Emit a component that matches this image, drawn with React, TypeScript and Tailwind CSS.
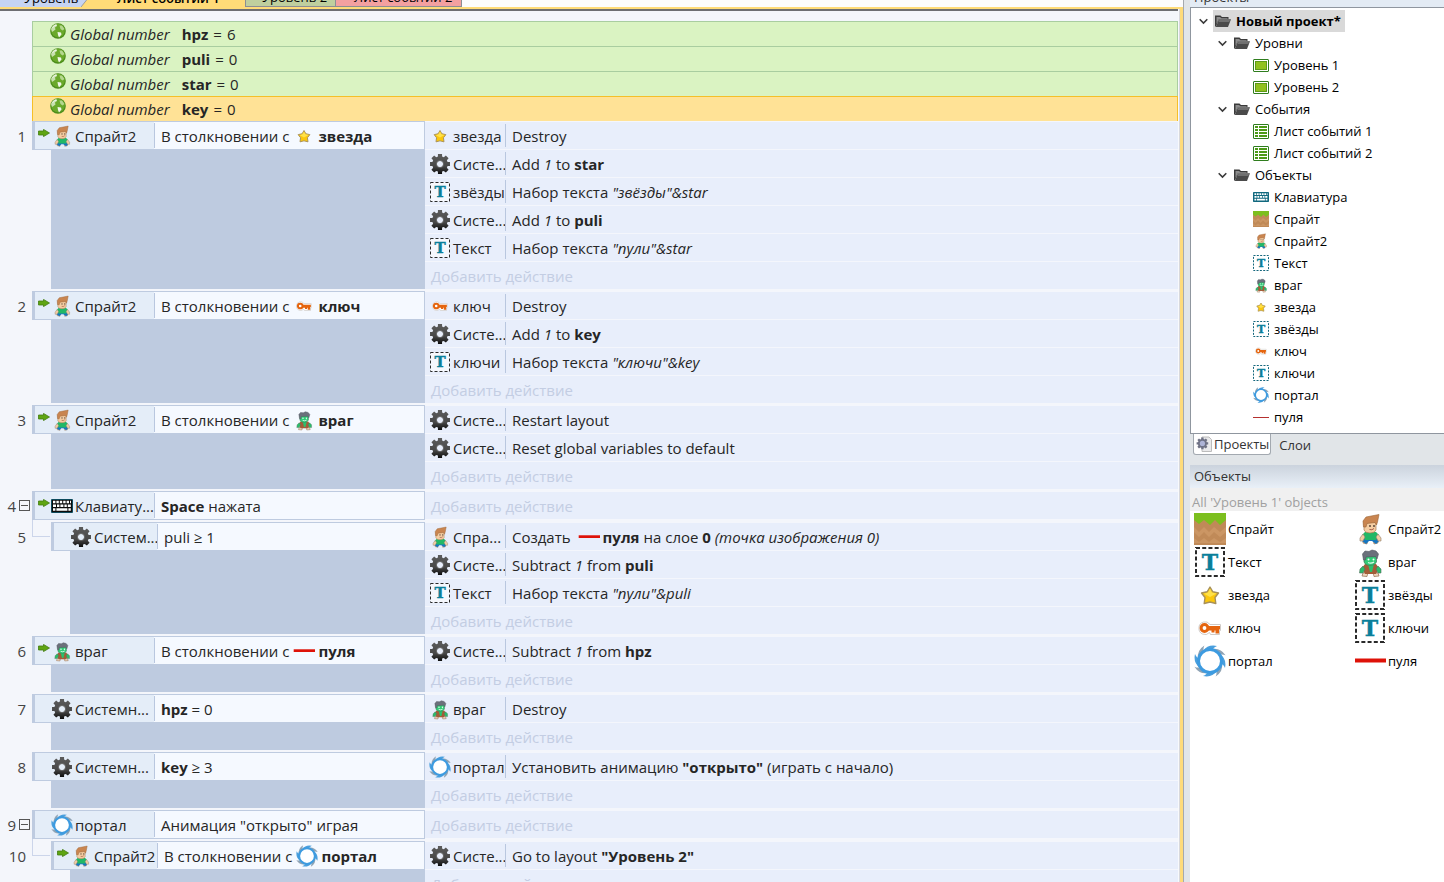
import React from "react";

type IconName =
  | "boy" | "zombie" | "star" | "key" | "portal" | "gear" | "text"
  | "keyboard" | "keyboardTeal" | "bullet" | "bulletThin" | "ground";

const PORTAL_BLADES = [0, 45, 90, 135, 180, 225, 270, 315];

function Shape({ name }: { name: IconName }) {
  switch (name) {
    case "boy":
      return (
        <g>
          <path d="M9 28 L14 26 L13 31 L9 30 Z M24 28 L19 26 L20 31 L24 30 Z" fill="#e8b98e" stroke="#8f6a4b" strokeWidth="0.600" />
          <path d="M10 25 H23 L25 28 L22 31 L18 28 H15 L12 31 L8 28 Z" fill="#1676c0" />
          <path d="M8 22 L11 19 H22 L25 22 L22 27 H11 Z" fill="#22b866" />
          <path d="M9 21 L11 24 L9 28 L6 28 L6 25 Z" fill="#f3cda4" stroke="#8f7a66" strokeWidth="0.600" />
          <path d="M24 21 L22 24 L24 28 L27 28 L27 25 Z" fill="#f3cda4" stroke="#8f7a66" strokeWidth="0.600" />
          <path d="M10 9 H22 V17 Q21 20 16 20 Q11 20 10 17 Z" fill="#f5cda2" stroke="#a67c55" strokeWidth="0.700" />
          <path d="M9.500 14 L9 8 L12 4 L25 1.500 L23.500 9 L22.500 12 L21 9.500 L13 10.500 L12 14 Z" fill="#c98550" stroke="#9b6435" strokeWidth="0.600" />
          <circle cx="16" cy="13" r="0.900" fill="#4a3a30" />
          <circle cx="20" cy="13" r="0.900" fill="#4a3a30" />
          <path d="M15.500 16.500 q2.500 1 4.500 -1" stroke="#a5604a" fill="none" />
        </g>
      );
    case "zombie":
      return (
        <g>
          <path d="M9 27 L14 26 L13 30.500 L8 30 Z M24 27 L19 26 L20 30.500 L25 30 Z" fill="#efd6bf" stroke="#8f6a4b" strokeWidth="0.700" />
          <path d="M8 22 L11 18 H22 L25 22 L22 28 H11 Z" fill="#a35d38" />
          <path d="M14 18 H20 L18 26 H16 Z" fill="#2ac16d" />
          <path d="M9 20 L11 23 L9 27 L5.500 27 L6 23 Z" fill="#29bd6a" stroke="#55705f" strokeWidth="0.600" />
          <path d="M24 20 L22 23 L24 27 L27 27 L27 23 Z" fill="#29bd6a" stroke="#55705f" strokeWidth="0.600" />
          <path d="M10 10 H22.500 V16 Q21 19.500 16 19.500 Q11 19.500 10 16 Z" fill="#31cb76" stroke="#43785a" strokeWidth="0.700" />
          <path d="M9.500 14 L8.500 8 L11 5 L15 5.500 L18 4 L22 5 L24.500 8 L23 13 L21.500 10.500 L12 11 L11.500 14 Z" fill="#6b707b" stroke="#505560" strokeWidth="0.600" />
          <circle cx="14.500" cy="13.500" r="1" fill="#f5fff8" />
          <circle cx="19.500" cy="13.500" r="1" fill="#f5fff8" />
          <path d="M14 16.500 q3 1.500 6 -0.500" stroke="#e4fbee" strokeWidth="1.200" fill="none" />
        </g>
      );
    case "star":
      return (
        <g>
          <path d="M16 8 L18.700 12.700 L24.500 14 L21 18.500 L21.800 24.500 L16 23 L10.200 24.500 L11 18.500 L7.500 14 L13.300 12.700 Z" fill="#fbc70d" stroke="#a8915a" strokeWidth="1.400" strokeLinejoin="round" />
          <path d="M16 9.500 L17.800 13.500 L22.500 14.500 L16 18 L10 14.800 L14 13.500 Z" fill="#ffe14a" />
        </g>
      );
    case "key":
      return (
        <g>
          <path d="M5 16 a6 6 0 0 1 11 -3.500 h10.500 v6 h-1 v4 h-9 l-1 -2 a6 6 0 0 1 -10.500 -4.500z" fill="#fff" stroke="#cfcac6" strokeWidth="1" />
          <circle cx="10.500" cy="16" r="3.400" fill="none" stroke="#e5650f" strokeWidth="3" />
          <path d="M14 14 h12 v3.500 h-1 v4 h-3.500 v-3 h-1 v2 h-3 v-2 h-3.500 z" fill="#e5650f" />
        </g>
      );
    case "portal":
      return (
        <g>
          {PORTAL_BLADES.map((a) => (
            <path key={a} d="M9 6 Q14 -1 23 1 Q19 2.500 18 6 Z" fill={a % 90 ? "#8fa3b4" : "#4a9fdd"} transform={`rotate(${a} 16 16)`} />
          ))}
          <circle cx="16" cy="16" r="11.500" fill="#fff" stroke="#3d9be0" strokeWidth="3" />
        </g>
      );
    case "gear":
      return (
        <g>
          <defs>
            <linearGradient id="gearFill" x1="0" y1="0" x2="0" y2="32" gradientUnits="userSpaceOnUse">
              <stop offset="0" stopColor="#5e5e5e" />
              <stop offset="0.6" stopColor="#484848" />
              <stop offset="1" stopColor="#050505" />
            </linearGradient>
          </defs>
          <path
            fill="url(#gearFill)"
            fillRule="evenodd"
            d="M13 1.500 H19 V5 L21.500 6 L24.500 3.500 L28.500 7.500 L26 10.500 L27 13 H30.500 V19 H27 L26 21.500 L28.500 24.500 L24.500 28.500 L21.500 26 L19 27 V30.500 H13 V27 L10.500 26 L7.500 28.500 L3.500 24.500 L6 21.500 L5 19 H1.500 V13 H5 L6 10.500 L3.500 7.500 L7.500 3.500 L10.500 6 L13 5 Z M16 11.500 A4.500 4.500 0 1 0 16 20.500 A4.500 4.500 0 1 0 16 11.500 Z"
          />
          <circle cx="16" cy="16" r="5.200" fill="none" stroke="#777" strokeWidth="1" />
        </g>
      );
    case "ground":
      return (
        <g>
          <rect width="32" height="32" fill="#c08a58" />
          <path d="M0 14 l5 5 5 -5 5 5 5 -5 6 5 6 -5 v5 l-6 5 -6 -5 -5 5 -5 -5 -5 5 -5 -5z M0 25 l5 4 5 -4 5 4 5 -4 6 4 6 -4 v5 h-32z" fill="#cb9664" />
          <path d="M0 0 H32 V7 L26 12 L21 7 L16 12 L10 7 L5 11 L0 7 Z" fill="#7cbf1e" />
        </g>
      );
    case "bullet":
      return <path d="M1 15.500 H32" stroke="#de1208" strokeWidth="4" />;
    case "bulletThin":
      return <path d="M0 17 H32" stroke="#b5302f" strokeWidth="2" />;
    default:
      return null;
  }
}

function Icon({ name, size }: { name: IconName; size: "s" | "m" | "l" }) {
  const box = size === "s" ? "size-4" : size === "m" ? "size-[22px]" : "size-8";
  const px = size === "s" ? 16 : size === "m" ? 22 : 32;

  if (name === "text") {
    const inset = size === "s" ? 0 : 1;
    const side = px - inset * 2 - (size === "l" ? 2 : 1);
    const start = (px - side) / 2;
    const ink = size === "s" ? "#14667c" : "#2a2a2a";
    const stroke = size === "l" ? 2 : 1;
    return (
      <svg className={`${box} shrink-0`} viewBox={`0 0 ${px} ${px}`} aria-hidden="true">
        <rect x={start} y={start} width={side} height={side} fill="#fff" fillOpacity="0.600" stroke={ink} strokeWidth={stroke} strokeDasharray={size === "l" ? "4 2.220" : size === "m" ? "3 2" : "2 1.330"} />
        <text x={px / 2} y={size === "l" ? 24 : size === "m" ? 16 : 12} textAnchor="middle" fill="#0a7f9a" stroke="#0a7f9a" strokeWidth="0.400" fontFamily="'DejaVu Serif', serif" fontWeight="bold" fontSize={size === "l" ? 22 : size === "m" ? 15 : 11}>T</text>
      </svg>
    );
  }

  if (name === "keyboard" || name === "keyboardTeal") {
    const teal = name === "keyboardTeal";
    return (
      <svg className={`${box} shrink-0`} viewBox="0 0 22 22" aria-hidden="true">
        <rect x="0" y="4" width="22" height="14" rx="1" fill={teal ? "#12697f" : "#0d4a5c"} />
        <rect x="1" y="5" width="20" height="12" fill={teal ? "#12697f" : "#0b0b0b"} />
        <path d="M2 7 H20" stroke="#fff" strokeWidth="2.400" strokeDasharray="2.400 1" />
        <path d="M2 10.700 H20" stroke="#fff" strokeWidth="2.400" strokeDasharray="3 1 2.400 1" />
        <path d="M2 14.500 H20" stroke="#fff" strokeWidth="2.400" strokeDasharray="2.400 1 11 1" />
      </svg>
    );
  }

  return (
    <svg className={`${box} shrink-0`} viewBox="0 0 32 32" aria-hidden="true">
      <Shape name={name} />
    </svg>
  );
}

function Globe() {
  return (
    <svg className="size-4 shrink-0" viewBox="0 0 16 16" aria-hidden="true">
      <circle cx="8" cy="8" r="7.800" fill="#4c8d1b" />
      <circle cx="8" cy="7.500" r="6.800" fill="#6aa92a" />
      <path d="M1 6 Q2.500 2 6 1 L7 3 L5 4.500 L5.500 6.500 L3.500 8 L2 9 Z" fill="#c6dfae" />
      <path d="M9.500 2.500 L12 2.500 L14.500 6 L12.500 7.500 L10.500 6 Z" fill="#b5d78f" />
      <path d="M7.500 9 L11 9.500 L11.500 11.500 L9 14.500 L8 12 Z" fill="#f0f7ea" />
      <path d="M2.500 5 Q4 2 7 2" stroke="#fff" fill="none" opacity="0.7" />
    </svg>
  );
}

function TriggerArrow() {
  return (
    <svg className="h-2 w-3" viewBox="0 0 12 8" aria-hidden="true">
      <path d="M0.500 2 H5.500 V0.400 L11.500 4 L5.500 7.600 V6 H0.500 Z" fill="#5fa512" stroke="#427c10" strokeWidth="0.800" />
    </svg>
  );
}

function Folder() {
  return (
    <svg className="size-4 shrink-0" viewBox="0 0 16 16" aria-hidden="true">
      <path d="M0 2.500 H5.500 L7 4 H13.500 V6 H4 L1 13.500 H0 Z" fill="#3b3b3b" />
      <path d="M1.500 4 H5 L6.500 5.300 H12.500 V6 H4 L1.500 11 Z" fill="#8d8d8d" />
      <path d="M4 6.300 H16 L13 14 H0.800 Z" fill="#4a4a4a" />
      <path d="M4.500 6.800 H15.200 L14.300 9 H3.600 Z" fill="#707070" />
    </svg>
  );
}

function LayoutIcon() {
  return (
    <svg className="size-4 shrink-0" viewBox="0 0 16 16" aria-hidden="true">
      <rect x="0.500" y="2.500" width="15" height="12" rx="0.500" fill="#fff" stroke="#2f7d1e" />
      <rect x="2.500" y="4.500" width="11" height="8" fill="#90c11f" stroke="#5f9a18" />
    </svg>
  );
}

function SheetIcon() {
  return (
    <svg className="size-4 shrink-0" viewBox="0 0 16 16" aria-hidden="true">
      <rect x="0.500" y="1.500" width="15" height="14" rx="0.500" fill="#fff" stroke="#2f7d1e" />
      <path d="M2 4 H5 M6 4 H14 M2 7 H5 M6 7 H14 M2 10 H5 M6 10 H14 M2 13 H5 M6 13 H14" stroke="#4c9a17" strokeWidth="2" />
    </svg>
  );
}

function ProjectTabIcon() {
  return (
    <svg className="size-4 shrink-0" viewBox="0 0 16 16" aria-hidden="true">
      <path d="M6 1 H13 L15.500 3.500 V15.500 H6 Z" fill="#e9e9ea" stroke="#bcbcbc" />
      <g transform="translate(0 1) scale(0.400)">
        <path fill="#6f7285" d="M13 1.500 H19 V5 L21.500 6 L24.500 3.500 L28.500 7.500 L26 10.500 L27 13 H30.500 V19 H27 L26 21.500 L28.500 24.500 L24.500 28.500 L21.500 26 L19 27 V30.500 H13 V27 L10.500 26 L7.500 28.500 L3.500 24.500 L6 21.500 L5 19 H1.500 V13 H5 L6 10.500 L3.500 7.500 L7.500 3.500 L10.500 6 L13 5 Z" />
        <circle cx="16" cy="16" r="6.500" fill="#aeb4d6" />
      </g>
    </svg>
  );
}

interface Action {
  icon: IconName;
  name: string;
  body: React.ReactNode;
}

interface EventData {
  n: number;
  sub?: boolean;
  collapsible?: boolean;
  trigger?: boolean;
  icon: IconName;
  name: string;
  body: React.ReactNode;
  actions: Action[];
}

function Ref({ icon, children }: { icon: IconName; children: React.ReactNode }) {
  return (
    <>
      <span className="mr-[3px] ml-1"><Icon name={icon} size="m" /></span>
      <b>{children}</b>
    </>
  );
}

const collision = (icon: IconName, name: string) => (
  <>
    В столкновении с<Ref icon={icon}>{name}</Ref>
  </>
);

const sys = (body: React.ReactNode): Action => ({ icon: "gear", name: "Систе...", body });
const setText = (name: string, value: string): Action => ({
  icon: "text",
  name,
  body: <span>Набор текста <i>{value}</i></span>,
});

const VARIABLES = [
  { name: "hpz", value: 6 },
  { name: "puli", value: 0 },
  { name: "star", value: 0 },
  { name: "key", value: 0, selected: true },
];

const EVENTS: EventData[] = [
  {
    n: 1, trigger: true, icon: "boy", name: "Спрайт2", body: collision("star", "звезда"),
    actions: [
      { icon: "star", name: "звезда", body: "Destroy" },
      sys(<span>Add <i>1</i> to <b>star</b></span>),
      setText("звёзды", '"звёзды"&star'),
      sys(<span>Add <i>1</i> to <b>puli</b></span>),
      setText("Текст", '"пули"&star'),
    ],
  },
  {
    n: 2, trigger: true, icon: "boy", name: "Спрайт2", body: collision("key", "ключ"),
    actions: [
      { icon: "key", name: "ключ", body: "Destroy" },
      sys(<span>Add <i>1</i> to <b>key</b></span>),
      setText("ключи", '"ключи"&key'),
    ],
  },
  {
    n: 3, trigger: true, icon: "boy", name: "Спрайт2", body: collision("zombie", "враг"),
    actions: [sys("Restart layout"), sys("Reset global variables to default")],
  },
  {
    n: 4, trigger: true, collapsible: true, icon: "keyboard", name: "Клавиату...",
    body: <span><b>Space</b> нажата</span>, actions: [],
  },
  {
    n: 5, sub: true, icon: "gear", name: "Систем...", body: "puli ≥ 1",
    actions: [
      {
        icon: "boy", name: "Спра...",
        body: (
          <>
            <span className="mr-[3px]">Создать</span>
            <Ref icon="bullet">пуля</Ref>
            <span className="ml-1">на слое <b>0</b> <i>(точка изображения 0)</i></span>
          </>
        ),
      },
      sys(<span>Subtract <i>1</i> from <b>puli</b></span>),
      setText("Текст", '"пули"&puli'),
    ],
  },
  {
    n: 6, trigger: true, icon: "zombie", name: "враг", body: collision("bullet", "пуля"),
    actions: [sys(<span>Subtract <i>1</i> from <b>hpz</b></span>)],
  },
  {
    n: 7, icon: "gear", name: "Системн...", body: <span><b>hpz</b> = 0</span>,
    actions: [{ icon: "zombie", name: "враг", body: "Destroy" }],
  },
  {
    n: 8, icon: "gear", name: "Системн...", body: <span><b>key</b> ≥ 3</span>,
    actions: [
      { icon: "portal", name: "портал", body: <span>Установить анимацию <b>"открыто"</b> (играть с начало)</span> },
    ],
  },
  { n: 9, collapsible: true, icon: "portal", name: "портал", body: 'Анимация "открыто" играя', actions: [] },
  {
    n: 10, sub: true, trigger: true, icon: "boy", name: "Спрайт2", body: collision("portal", "портал"),
    actions: [sys(<span>Go to layout <b>"Уровень 2"</b></span>)],
  },
];

function EventBlock({ event }: { event: EventData }) {
  const { sub } = event;
  return (
    <div className="flex">
      <div className="flex h-[29px] w-8 shrink-0 items-center justify-end gap-[3px] text-[#444]">
        <span className={event.collapsible ? "" : "mr-[6px]"}>{event.n}</span>
        {event.collapsible && (
          <button aria-label="Свернуть" className="mr-[2px] flex size-[11px] items-center justify-center border border-[#555]">
            <span className="h-px w-[7px] bg-[#555]" />
          </button>
        )}
      </div>
      {sub && <div className="-mt-[2px] mr-px h-[17px] w-[18px] shrink-0 border-b border-l border-[#ccd5ea]" />}
      <div className={`flex shrink-0 flex-col ${sub ? "w-[374px]" : "w-[393px]"}`}>
        <div className="flex h-[29px] shrink-0 border border-l-[3px] border-[#becbe0] bg-[#f5f9ff]">
          <div className={`flex shrink-0 items-center bg-[#e4edf8] ${sub ? "w-[103px]" : "w-[119px]"}`}>
            <span className="mb-[6px] w-4 shrink-0 pl-[3px]">{event.trigger && <TriggerArrow />}</span>
            <Icon name={event.icon} size="m" />
            <span className="ml-[2px]">{event.name}</span>
          </div>
          <div className="my-px border-l border-[#b9c7df]" />
          <div className="flex items-center pl-[6px]">{event.body}</div>
        </div>
        <div className="ml-[19px] grow bg-[#becbe0]" />
      </div>
      <div className="flex min-w-0 grow flex-col gap-px bg-[#f4f6fc] pt-px">
        {event.actions.map((action, i) => (
          <div key={i} className="flex h-[27px] bg-[#e8eefb] pl-1">
            <div className="flex w-[76px] shrink-0 items-center">
              <Icon name={action.icon} size="m" />
              <span className="ml-[2px]">{action.name}</span>
            </div>
            <div className="my-[2px] border-l border-[#b9c7df]" />
            <div className="flex items-center pl-[6px]">{action.body}</div>
          </div>
        ))}
        <button className="h-[27px] bg-[#e8eefb] pl-[6px] text-left text-[#c3cde3]">Добавить действие</button>
      </div>
    </div>
  );
}

function EventSheet() {
  return (
    <main className="min-h-0 grow overflow-hidden border-t-2 border-[#6d6e72] bg-[#f4f6fb] pt-[10px] text-[15px] leading-5 whitespace-nowrap text-[#262626]">
      <div className="ml-8">
        {VARIABLES.map((v) => (
          <div
            key={v.name}
            className={`flex border ${v.selected ? "-mb-px h-[26px] border-[#f5bf28] bg-[#ffe296]" : "h-[25px] border-b-0 border-[#a9cda0] bg-[#daf3c2]"}`}
          >
            <span className="mt-px ml-[17px]"><Globe /></span>
            <span className="mt-[2px] ml-1">
              <i className="mr-3">Global number</i><b className="mr-[5px]">{v.name}</b><span className="mr-[5px]">=</span>{v.value}
            </span>
          </div>
        ))}
      </div>
      <div className="flex flex-col gap-[2px]">
        {EVENTS.map((e) => <EventBlock key={e.n} event={e} />)}
      </div>
    </main>
  );
}

function Tabs() {
  return (
    <nav className="flex h-[7px] shrink-0 items-end overflow-hidden bg-[#fcfcfd] text-[13px] leading-[18px] whitespace-nowrap text-black">
      <button className="h-[22px] w-[81px] shrink-0 bg-[#c5d3f3] pt-[3px] pl-6 text-left">Уровень 1</button>
      <svg className="h-[22px] w-2 shrink-0" viewBox="0 0 8 22" aria-hidden="true">
        <rect width="8" height="22" fill="#c5d3f3" />
        <path d="M8 12 V22 H0 Z" fill="#ffdb78" />
        <path d="M8 12 L0 22" stroke="#8b8e94" strokeWidth="0.800" />
      </svg>
      <button className="h-[22px] w-[156px] shrink-0 bg-[#ffdb78] pt-[3px] pl-7 text-left font-semibold">Лист событий 1</button>
      <button className="h-[22px] w-[91px] shrink-0 border border-[#8b8e94] bg-[#bfcf9e] pt-[2px] pl-4 text-left">Уровень 2</button>
      <button className="h-[22px] w-[126px] shrink-0 border border-l-0 border-[#8b8e94] bg-[#f3a0a0] pt-[2px] pl-[18px] text-left">Лист событий 2</button>
    </nav>
  );
}

function TreeRow({ depth, open, icon, label, root }: { depth: 0 | 1 | 2; open?: boolean; icon: React.ReactNode; label: string; root?: boolean }) {
  const pad = depth === 0 ? "pl-[5px]" : depth === 1 ? "pl-6" : "pl-[43px]";
  return (
    <li className={`flex h-[22px] items-center ${pad}`}>
      <span className="w-4 shrink-0">
        {open && (
          <svg className="h-[7px] w-[9px]" viewBox="0 0 9 7" fill="none" stroke="#3a3a3a" strokeWidth="1.600" aria-hidden="true">
            <path d="M0.700 1.200 L4.500 5 L8.300 1.200" />
          </svg>
        )}
      </span>
      <span className={`flex h-[22px] items-center gap-[5px] pr-1 ${root ? "-ml-[2px] bg-[#d9d9d9] pl-[2px] font-bold" : ""}`}>
        {icon}
        {label}
      </span>
    </li>
  );
}

const TREE_OBJECTS: { icon: IconName; label: string }[] = [
  { icon: "keyboardTeal", label: "Клавиатура" },
  { icon: "ground", label: "Спрайт" },
  { icon: "boy", label: "Спрайт2" },
  { icon: "text", label: "Текст" },
  { icon: "zombie", label: "враг" },
  { icon: "star", label: "звезда" },
  { icon: "text", label: "звёзды" },
  { icon: "key", label: "ключ" },
  { icon: "text", label: "ключи" },
  { icon: "portal", label: "портал" },
  { icon: "bulletThin", label: "пуля" },
];

const LAYOUT_OBJECTS: { icon: IconName; label: string }[] = [
  { icon: "ground", label: "Спрайт" },
  { icon: "boy", label: "Спрайт2" },
  { icon: "text", label: "Текст" },
  { icon: "zombie", label: "враг" },
  { icon: "star", label: "звезда" },
  { icon: "text", label: "звёзды" },
  { icon: "key", label: "ключ" },
  { icon: "text", label: "ключи" },
  { icon: "portal", label: "портал" },
  { icon: "bullet", label: "пуля" },
];

function Sidebar() {
  return (
    <aside className="flex w-[254px] shrink-0 flex-col overflow-hidden bg-[#e1e5e8] text-[13px] leading-[18px] whitespace-nowrap text-black">
      <div className="flex h-[7px] shrink-0 items-end overflow-hidden bg-[#e3ebf4] pb-px pl-1 text-[#333]">
        <span className="shrink-0">Проекты</span>
      </div>
      <ul className="border border-r-0 border-[#8f969f] bg-white pt-[2px] pb-[5px] pl-[3px]">
        <TreeRow depth={0} open root icon={<Folder />} label="Новый проект*" />
        <TreeRow depth={1} open icon={<Folder />} label="Уровни" />
        <TreeRow depth={2} icon={<LayoutIcon />} label="Уровень 1" />
        <TreeRow depth={2} icon={<LayoutIcon />} label="Уровень 2" />
        <TreeRow depth={1} open icon={<Folder />} label="События" />
        <TreeRow depth={2} icon={<SheetIcon />} label="Лист событий 1" />
        <TreeRow depth={2} icon={<SheetIcon />} label="Лист событий 2" />
        <TreeRow depth={1} open icon={<Folder />} label="Объекты" />
        {TREE_OBJECTS.map((o) => (
          <TreeRow key={o.label} depth={2} icon={<Icon name={o.icon} size="s" />} label={o.label} />
        ))}
      </ul>
      <div className="flex h-[31px] shrink-0 items-start pl-[3px] text-[#333]">
        <button className="flex h-[21px] items-center gap-[2px] rounded-b-[3px] border border-t-0 border-[#a3a9b0] bg-white pr-px pl-[2px]">
          <ProjectTabIcon />
          Проекты
        </button>
        <button className="h-[21px] px-2">Слои</button>
      </div>
      <h2 className="h-[23px] shrink-0 bg-linear-to-b from-[#cbd3dd] to-[#e9f0f8] pt-[2px] pl-1 text-[#333]">Объекты</h2>
      <div className="flex h-[23px] shrink-0 items-center bg-[#f0f0f0] pt-[5px] pl-[2px] text-[#a0a0a0]">All 'Уровень 1' objects</div>
      <ul className="grid grow auto-rows-[33px] grid-cols-[160px_1fr] content-start bg-white pt-px pl-1">
        {LAYOUT_OBJECTS.map((o) => (
          <li key={o.label} className="flex items-center gap-[2px]">
            <Icon name={o.icon} size="l" />
            {o.label}
          </li>
        ))}
      </ul>
    </aside>
  );
}

export default function App() {
  return (
    <div className="flex h-screen overflow-hidden bg-[#e1e5e8] font-['Open_Sans',sans-serif]">
      <div className="flex min-w-0 grow flex-col">
        <Tabs />
        <div className="flex min-h-0 grow flex-col border-t-2 border-r-[3px] border-[#ffdb78]">
          <div className="flex min-h-0 grow flex-col border-r border-[#d8d9dd] bg-[#f8f9fc] pr-px">
            <EventSheet />
          </div>
        </div>
      </div>
      <div className="w-[7px] shrink-0 border-l border-[#a5a9ae]" />
      <Sidebar />
    </div>
  );
}
